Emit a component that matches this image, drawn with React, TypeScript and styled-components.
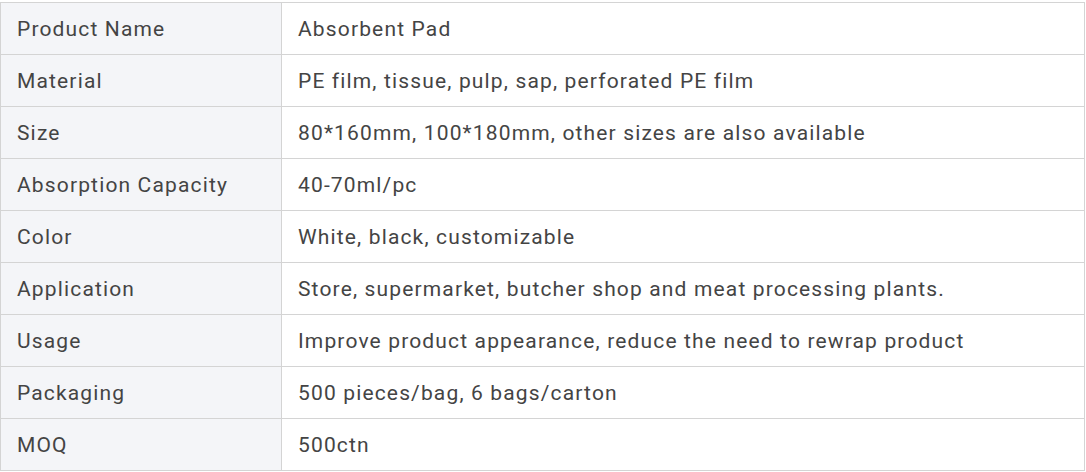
import React from 'react';
import styled, { createGlobalStyle } from 'styled-components';

const GlobalStyle = createGlobalStyle`
  body {
    margin: 0;
    background: #ffffff;
    font-family: Roboto, 'Liberation Sans', sans-serif;
  }
`;

const Wrapper = styled.div`
  padding-top: 2px;
  width: 1086px;
`;

const Table = styled.table`
  width: 1085px;
  border-collapse: collapse;
  border: 1px solid #d4d4d4;
  color: #444444;
  font-size: 21px;
  letter-spacing: 1.15px;
`;

const Row = styled.tr`
  height: 52px;
`;

const Cell = styled.td<{ $label?: boolean }>`
  border: 1px solid #d4d4d4;
  padding: 0 16px;
  vertical-align: middle;
  background: ${(p) => (p.$label ? '#f4f5f8' : '#ffffff')};
  width: ${(p) => (p.$label ? '248px' : 'auto')};
`;

const rows: [string, string][] = [
  ['Product Name', 'Absorbent Pad'],
  ['Material', 'PE film, tissue, pulp, sap, perforated PE film'],
  ['Size', '80*160mm, 100*180mm, other sizes are also available'],
  ['Absorption Capacity', '40-70ml/pc'],
  ['Color', 'White, black, customizable'],
  ['Application', 'Store, supermarket, butcher shop and meat processing plants.'],
  ['Usage', 'Improve product appearance, reduce the need to rewrap product'],
  ['Packaging', '500 pieces/bag, 6 bags/carton'],
  ['MOQ', '500ctn'],
];

export default function App() {
  return (
    <Wrapper>
      <GlobalStyle />
      <Table>
        <tbody>
          {rows.map(([label, value]) => (
            <Row key={label}>
              <Cell $label>{label}</Cell>
              <Cell>{value}</Cell>
            </Row>
          ))}
        </tbody>
      </Table>
    </Wrapper>
  );
}
